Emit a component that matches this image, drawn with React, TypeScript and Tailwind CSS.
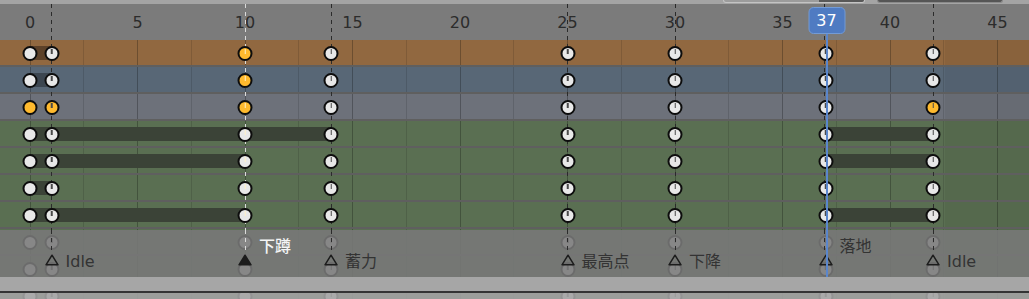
import React from "react";

// frame -> x pixel on the timeline canvas
const fx = (f: number) => 30 + 21.5 * f;

const KEY_FRAMES = [0, 1, 10, 14, 25, 30, 37, 42];
const CURRENT = 37;

type Marker = { f: number; name: string; selected?: boolean; raised?: boolean };
const MARKERS: Marker[] = [
  { f: 1, name: "Idle" },
  { f: 10, name: "下蹲", selected: true, raised: true },
  { f: 14, name: "蓄力" },
  { f: 25, name: "最高点" },
  { f: 30, name: "下降" },
  { f: 37, name: "落地", raised: true },
  { f: 42, name: "Idle" },
];

type Row = { bg: string; hold: string; sel: number[]; holds: [number, number][] };

const ROWS: Row[] = [
  { bg: "bg-[#916840]", hold: "bg-[#5c4129]", sel: [10], holds: [[0, 1]] },
  { bg: "bg-[#586776]", hold: "bg-[#3c4650]", sel: [10], holds: [[0, 1]] },
  { bg: "bg-[#6d717a]", hold: "bg-[#45484e]", sel: [0, 1, 10, 42], holds: [] },
  { bg: "bg-[#5a6f52]", hold: "bg-[#3b4337]", sel: [], holds: [[0, 1], [1, 10], [10, 14], [37, 42]] },
  { bg: "bg-[#5a6f52]", hold: "bg-[#3b4337]", sel: [], holds: [[0, 1], [1, 10], [37, 42]] },
  { bg: "bg-[#5a6f52]", hold: "bg-[#3b4337]", sel: [], holds: [[0, 1]] },
  { bg: "bg-[#5a6f52]", hold: "bg-[#3b4337]", sel: [], holds: [[0, 1], [1, 10], [37, 42]] },
  // rows below are mostly hidden under the marker strip
  { bg: "bg-[#5a6f52]", hold: "bg-[#3b4337]", sel: [], holds: [] },
  { bg: "bg-[#5a6f52]", hold: "bg-[#3b4337]", sel: [], holds: [] },
  { bg: "bg-[#5a6f52]", hold: "bg-[#3b4337]", sel: [], holds: [] },
];

const GRID = Array.from({ length: 21 }, (_, i) => (i - 1) * 2.5);
const LABELS = [0, 5, 10, 15, 20, 25, 30, 35, 40, 45];

const DASH_DARK =
  "bg-[repeating-linear-gradient(to_bottom,#2b2b2b_0px,#2b2b2b_4px,transparent_4px,transparent_8px)]";
const DASH_LIGHT =
  "bg-[repeating-linear-gradient(to_bottom,#dadada_0px,#dadada_4px,transparent_4px,transparent_8px)]";

function Key({ f, sel }: { f: number; sel: boolean }) {
  const marker = MARKERS.find((m) => m.f === f);
  return (
    <div
      className={`absolute top-[5.5px] z-20 h-[15px] w-[15px] -translate-x-1/2 rounded-full border-2 border-[#0d0d0d] ${
        sel ? "bg-[#ffba2e]" : "bg-[#e8e8e8]"
      }`}
      style={{ left: fx(f) }}
    >
      {marker && (
        <div
          className={`absolute left-1/2 top-[1px] h-[5px] w-[1.5px] -translate-x-1/2 ${
            marker.selected ? "bg-[#fff1c8]" : "bg-[#4a4a4a]"
          }`}
        />
      )}
    </div>
  );
}

function ChannelRow({ row }: { row: Row }) {
  return (
    <div className={`relative h-[25px] shrink-0 ${row.bg}`}>
      {GRID.map((g) => (
        <div
          key={g}
          className={`absolute top-0 h-full w-px ${g % 5 === 0 ? "bg-black/25" : "bg-black/12"}`}
          style={{ left: Math.floor(fx(g)) }}
        />
      ))}
      <div className="absolute right-0 top-0 h-full w-[84px] bg-black/5" />
      {row.holds.map(([a, b]) => (
        <div
          key={a}
          className={`absolute top-[6px] h-[14px] ${row.hold}`}
          style={{ left: fx(a), width: fx(b) - fx(a) }}
        />
      ))}
      {KEY_FRAMES.map((f) => (
        <Key key={f} f={f} sel={row.sel.includes(f)} />
      ))}
    </div>
  );
}

function Triangle({ filled }: { filled?: boolean }) {
  return (
    <svg width="14" height="12" viewBox="0 0 14 12">
      <polygon
        points="7,1.2 13,10.8 1,10.8"
        fill={filled ? "#1c1c1c" : "none"}
        stroke="#1c1c1c"
        strokeWidth="1.5"
        strokeLinejoin="round"
      />
    </svg>
  );
}

export default function App() {
  return (
    <div
      className="relative flex h-[299px] w-[1029px] flex-col overflow-hidden bg-[#5f5f5f]"
      style={{ fontFamily: '"DejaVu Sans", "Noto Sans CJK SC", sans-serif' }}
    >
      {/* top edge with the bottoms of header widgets */}
      <div className="flex h-[4px] shrink-0 items-start gap-[12px] bg-[#a4a4a4] pl-[723px]">
        <div className="flex h-[3px] w-[142px] overflow-hidden rounded-b-[3px] border-x border-b border-[#c4c4c4] bg-[#9c9c9c]">
          <div className="ml-auto h-full w-[45px] bg-[#585858]" />
        </div>
        <div className="h-[3px] w-[126px] rounded-b-[3px] border-x border-b border-[#8a8a8a] bg-[#555555]" />
      </div>

      {/* frame ruler */}
      <div className="relative h-[36px] shrink-0 bg-[#7b7b7b] text-[16px] text-[#2c2c2c]">
        {LABELS.map((f) => (
          <span
            key={f}
            className="absolute top-[9px] -translate-x-1/2 leading-[20px]"
            style={{ left: fx(f) }}
          >
            {f}
          </span>
        ))}
        <div
          className="absolute top-[3px] z-40 flex h-[27px] w-[37px] -translate-x-1/2 items-center justify-center rounded-[5px] border border-[#739bd6] bg-[#4f7bc2] text-white"
          style={{ left: fx(CURRENT) + 1 }}
        >
          {CURRENT}
        </div>
      </div>

      {/* channels */}
      <div className="flex flex-1 flex-col gap-[2px] overflow-hidden">
        {ROWS.map((r, i) => (
          <ChannelRow key={i} row={r} />
        ))}
      </div>

      {/* marker lines over ruler and channels, under keys */}
      {MARKERS.map((m) => (
        <div
          key={m.f}
          className={`absolute top-[4px] z-10 h-[226px] w-px ${m.selected ? DASH_LIGHT : DASH_DARK}`}
          style={{ left: Math.floor(fx(m.f)) - (m.f === CURRENT ? 1 : 0) }}
        />
      ))}

      {/* marker strip */}
      <div className="absolute left-0 top-[230px] z-30 h-[47px] w-full bg-[#797979]/[0.88]">
        {MARKERS.map((m) => (
          <React.Fragment key={m.f}>
            <div
              className={`absolute top-0 h-[24px] w-px ${m.selected ? DASH_LIGHT : DASH_DARK}`}
              style={{ left: Math.floor(fx(m.f)) - (m.f === CURRENT ? 1 : 0) }}
            />
            <div className="absolute top-[24px] -translate-x-1/2" style={{ left: fx(m.f) }}>
              <Triangle filled={m.selected} />
            </div>
            <span
              className={`absolute whitespace-nowrap text-[16px] leading-[20px] ${
                m.raised ? "top-[7px]" : "top-[22px]"
              } ${m.selected ? "font-medium text-[#f4f4f4]" : "text-[#333333]"}`}
              style={{ left: fx(m.f) + 14 }}
            >
              {m.name}
            </span>
          </React.Fragment>
        ))}
      </div>

      {/* scrollbar area at the bottom */}
      <div className="absolute left-0 top-[277px] z-30 flex h-[22px] w-full flex-col">
        <div className="h-[14px] bg-[#a6a6a6]" />
        <div className="h-[2px] bg-[#343434]" />
        <div className="h-[6px] bg-[#a3a3a3]/90" />
      </div>

      {/* current frame line */}
      <div
        className="absolute top-[34px] z-50 h-[243px] w-[1.5px] bg-[#5a86cc]"
        style={{ left: fx(CURRENT) + 0.5 }}
      />
    </div>
  );
}
